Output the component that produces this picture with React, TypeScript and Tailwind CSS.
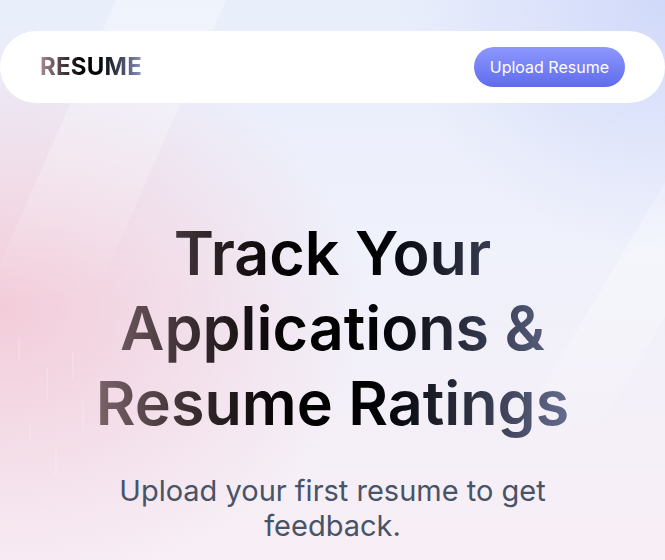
import React from "react";

export default function App() {
  return (
    <div
      className="relative min-h-[560px] w-full overflow-hidden bg-[radial-gradient(ellipse_55%_50%_at_0%_55%,#f3ccd9_0%,rgba(243,204,217,0)_100%),radial-gradient(ellipse_40%_45%_at_100%_0%,#d1d9fa_0%,rgba(209,217,250,0)_100%),linear-gradient(180deg,#e9eefb_0%,#eff1fb_45%,#f8eef5_100%)]"
      style={{ fontFamily: "Inter, 'Noto Sans', sans-serif" }}
    >
      <svg
        className="pointer-events-none absolute inset-0 h-full w-full"
        viewBox="0 0 665 560"
        preserveAspectRatio="none"
      >
        <defs>
          <linearGradient id="s1" x1="0" y1="0" x2="0" y2="1">
            <stop offset="0" stopColor="#ffffff" stopOpacity="0.3" />
            <stop offset="0.5" stopColor="#ffffff" stopOpacity="0.25" />
            <stop offset="1" stopColor="#ffffff" stopOpacity="0" />
          </linearGradient>
          <linearGradient id="s2" x1="0" y1="0" x2="0" y2="1">
            <stop offset="0" stopColor="#ffffff" stopOpacity="0" />
            <stop offset="0.45" stopColor="#ffffff" stopOpacity="0.35" />
            <stop offset="1" stopColor="#ffffff" stopOpacity="0" />
          </linearGradient>
        </defs>
        <polygon points="116,0 226,0 94,300 -16,300" fill="url(#s1)" />
        <polygon points="720,90 800,90 580,460 500,460" fill="url(#s2)" />
        <g stroke="#ffffff" strokeWidth="1" opacity="0.3">
          <line x1="19" y1="337" x2="19" y2="360" />
          <line x1="47" y1="368" x2="47" y2="400" />
          <line x1="73" y1="352" x2="73" y2="378" />
          <line x1="83" y1="400" x2="83" y2="430" />
          <line x1="30" y1="422" x2="30" y2="438" />
          <line x1="56" y1="448" x2="56" y2="475" />
        </g>
      </svg>

      <main className="relative flex flex-col items-center pt-[31px]">
        <nav className="flex w-full items-center justify-between rounded-full bg-white px-10 py-4">
          <p className="bg-gradient-to-r from-[#AB8C95] via-black to-[#8E97C5] bg-clip-text text-2xl font-bold tracking-[0.01em] text-transparent">
            RESUME
          </p>
          <a className="rounded-full bg-gradient-to-b from-[#8e98ff] to-[#606beb] px-4 py-2 text-base leading-6 text-white">
            Upload Resume
          </a>
        </nav>

        <section className="mt-[113px] flex w-full flex-col items-center gap-[32px] px-8 text-center">
          <h1 className="w-full bg-gradient-to-r from-[#AB8C95] via-black to-[#8E97C5] bg-clip-text text-[61px] leading-[75px] font-semibold text-transparent">
            Track Your
            <br />
            Applications &amp;
            <br />
            Resume Ratings
          </h1>
          <h2 className="max-w-[480px] text-[29px] leading-[35px] font-normal text-[#475467]">
            Upload your first resume to get feedback.
          </h2>
        </section>
      </main>
    </div>
  );
}
